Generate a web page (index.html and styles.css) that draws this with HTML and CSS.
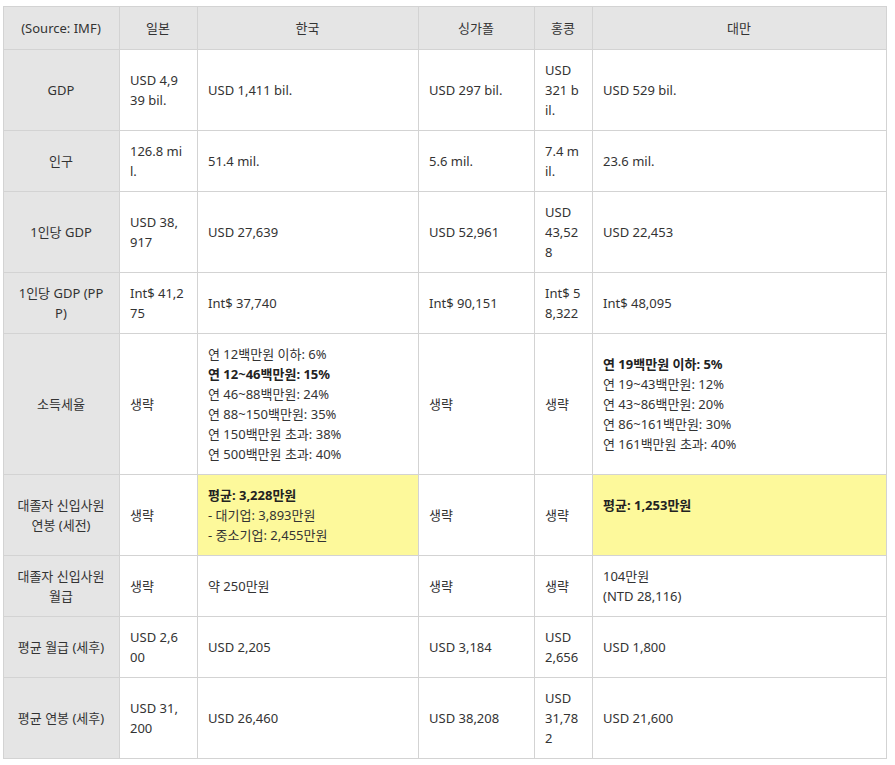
FILE: index.html
```html
<!DOCTYPE html>
<html lang="ko">
<head>
<meta charset="utf-8">
<link rel="stylesheet" href="styles.css">
</head>
<body>
<div class="wrap">
<table class="cmp">
<colgroup>
<col class="c1"><col class="c2"><col class="c3"><col class="c4"><col class="c5"><col class="c6">
</colgroup>
<thead>
<tr><th>(Source: IMF)</th><th>일본</th><th>한국</th><th>싱가폴</th><th>홍콩</th><th>대만</th></tr>
</thead>
<tbody>
<tr><th>GDP</th><td>USD 4,939 bil.</td><td>USD 1,411 bil.</td><td>USD 297 bil.</td><td>USD 321 bil.</td><td>USD 529 bil.</td></tr>
<tr><th>인구</th><td>126.8 mil.</td><td>51.4 mil.</td><td>5.6 mil.</td><td>7.4 mil.</td><td>23.6 mil.</td></tr>
<tr><th>1인당 GDP</th><td>USD 38,917</td><td>USD 27,639</td><td>USD 52,961</td><td>USD 43,528</td><td>USD 22,453</td></tr>
<tr><th>1인당 GDP (PPP)</th><td>Int$ 41,275</td><td>Int$ 37,740</td><td>Int$ 90,151</td><td>Int$ 58,322</td><td>Int$ 48,095</td></tr>
<tr><th>소득세율</th><td>생략</td><td>연 12백만원 이하: 6%<br><b>연 12~46백만원: 15%</b><br>연 46~88백만원: 24%<br>연 88~150백만원: 35%<br>연 150백만원 초과: 38%<br>연 500백만원 초과: 40%</td><td>생략</td><td>생략</td><td><b>연 19백만원 이하: 5%</b><br>연 19~43백만원: 12%<br>연 43~86백만원: 20%<br>연 86~161백만원: 30%<br>연 161백만원 초과: 40%</td></tr>
<tr><th>대졸자 신입사원 연봉 (세전)</th><td>생략</td><td class="hl"><b>평균: 3,228만원</b><br>- 대기업: 3,893만원<br>- 중소기업: 2,455만원</td><td>생략</td><td>생략</td><td class="hl"><b>평균: 1,253만원</b><br><br></td></tr>
<tr><th>대졸자 신입사원 월급</th><td>생략</td><td>약 250만원</td><td>생략</td><td>생략</td><td>104만원<br>(NTD 28,116)</td></tr>
<tr><th>평균 월급 (세후)</th><td>USD 2,600</td><td>USD 2,205</td><td>USD 3,184</td><td>USD 2,656</td><td>USD 1,800</td></tr>
<tr><th>평균 연봉 (세후)</th><td>USD 31,200</td><td>USD 26,460</td><td>USD 38,208</td><td>USD 31,782</td><td>USD 21,600</td></tr>
</tbody>
</table>
</div>
</body>
</html>
```
FILE: styles.css
```css
html, body {
  margin: 0;
  background: #ffffff;
}
.wrap {
  padding: 6px 3px;
}
.cmp {
  border-collapse: collapse;
  table-layout: fixed;
  width: 883px;
  font-family: "Noto Sans", "Noto Sans CJK KR", sans-serif;
  font-size: 13px;
  line-height: 20px;
  color: #333333;
}
.c1 { width: 116px; }
.c2 { width: 78px; }
.c3 { width: 221px; }
.c4 { width: 116px; }
.c5 { width: 58px; }
.c6 { width: 294px; }
.cmp th, .cmp td {
  border: 1px solid #d3d3d3;
  padding: 10px 11px 10px 10px;
  word-break: break-all;
  vertical-align: middle;
}
.cmp th {
  background: #e5e5e5;
  font-weight: normal;
  text-align: center;
}
.cmp thead th {
  padding-top: 11px;
  padding-bottom: 11px;
}
.cmp td {
  text-align: left;
  background: #ffffff;
}
.cmp tbody td:nth-child(2) {
  padding-right: 12.5px;
}
.cmp td.hl {
  background: #fdf99b;
}
.cmp b {
  font-weight: bold;
  color: #222222;
}
```
